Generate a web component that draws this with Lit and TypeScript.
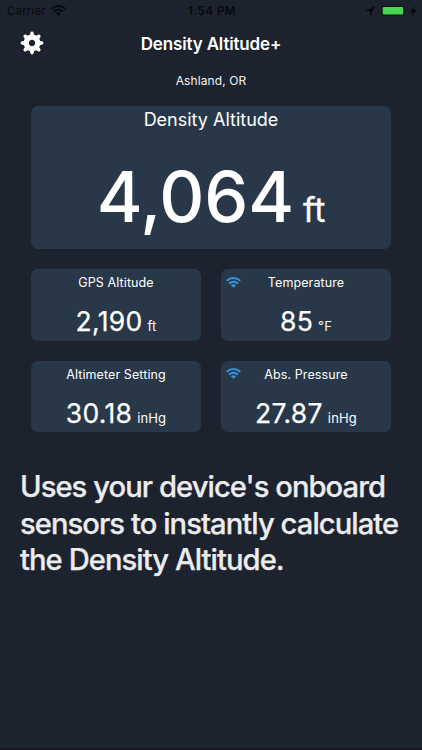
import { LitElement, html, css, svg, nothing } from "lit";
import { customElement, property } from "lit/decorators.js";

const wifi = svg`
  <path d="M0.7 3.8 Q7.5 -1.7 14.3 3.8" fill="none" stroke="currentColor" stroke-width="2"/>
  <path d="M3 6.5 Q7.5 2.9 12 6.5" fill="none" stroke="currentColor" stroke-width="1.9"/>
  <path d="M4.9 8.3 Q7.5 6.2 10.1 8.3 L8.2 10.2 Q7.5 10.8 6.8 10.2 Z" fill="currentColor"/>`;

@customElement("status-bar")
class StatusBar extends LitElement {
  static styles = css`
    :host {
      display: grid;
      grid-template-columns: 1fr auto 1fr;
      align-items: center;
      height: 22px;
      padding: 0 5px 0 7px;
      box-sizing: border-box;
      color: #06090d;
      font-size: 11.5px;
      line-height: 22px;
    }
    .left, .right { display: flex; align-items: center; }
    .left { gap: 5px; letter-spacing: 0.15px; }
    .left svg { margin-bottom: 1px; }
    .time { font-weight: 600; letter-spacing: 0.5px; }
    .right { justify-content: flex-end; }
    svg { display: block; }
  `;
  render() {
    return html`
      <div class="left">
        <span>Carrier</span>
        <svg width="15" height="11" viewBox="0 0 15 11">${wifi}</svg>
      </div>
      <div class="time">1:54 PM</div>
      <div class="right">
        <svg width="52" height="12" viewBox="0 0 52 12">
          <path d="M10 1 L5.3 11 L4.9 6.2 L0.3 5.8 Z" fill="currentColor"/>
          <rect x="16.5" y="0.8" width="23" height="10" rx="2" fill="#0b1015"/>
          <rect x="17.7" y="2" width="20.6" height="7.6" rx="1" fill="#44d650"/>
          <path d="M40.5 4.3 Q42 5.8 40.5 7.4 Z" fill="#0b1015"/>
          <path d="M50.3 0.8 L45.2 6.7 L48 6.7 L46.7 11.2 L51.7 5 L48.9 5 Z" fill="currentColor"/>
        </svg>
      </div>`;
  }
}

@customElement("nav-header")
class NavHeader extends LitElement {
  static styles = css`
    :host {
      display: grid;
      grid-template-columns: 44px 1fr 44px;
      align-items: center;
      height: 44px;
      padding: 0 10px;
      box-sizing: border-box;
      border-bottom: 1px solid #19202a;
    }
    .gear { display: block; justify-self: center; margin-bottom: 2px; }
    .title {
      text-align: center;
      color: #fff;
      font-size: 17px;
      font-weight: 600;
      letter-spacing: -0.16px;
      line-height: 43px;
      padding-top: 1px;
    }
  `;
  render() {
    const teeth = [0, 45, 90, 135, 180, 225, 270, 315];
    return html`
      <svg class="gear" width="24" height="24" viewBox="-12 -12 24 24" fill="#fff">
        <circle r="5.8" fill="none" stroke="#fff" stroke-width="5.2"/>
        ${teeth.map((a) => svg`<path transform="rotate(${a})" d="M-2.2 -7.4 L-1.7 -10 Q-1.4 -11.4 0 -11.4 Q1.4 -11.4 1.7 -10 L2.2 -7.4 Z"/>`)}
      </svg>
      <div class="title">Density Altitude+</div>`;
  }
}

@customElement("metric-card")
class MetricCard extends LitElement {
  @property() label = "";
  @property() value = "";
  @property() unit = "";
  @property({ type: Boolean }) sensor = false;
  @property({ type: Boolean, reflect: true }) large = false;

  static styles = css`
    :host {
      display: flex;
      flex-direction: column;
      align-items: center;
      position: relative;
      height: 71.5px;
      border-radius: 7px;
      background: #283849;
      color: #fff;
    }
    .label { font-size: 12.5px; line-height: 26px; letter-spacing: 0.1px; padding-top: 1px; }
    .reading { display: flex; align-items: baseline; gap: 5px; line-height: 36px; margin-top: 7px; }
    .value { font-size: 26.5px; letter-spacing: 0.3px; -webkit-text-stroke: 0.25px #fff; }
    .unit { font-size: 13px; letter-spacing: 0.15px; }
    .sensor { position: absolute; left: 5px; top: 7.5px; color: #3794e0; }
    :host([large]) { height: 143px; }
    :host([large]) .label { font-size: 18px; line-height: 26px; letter-spacing: 0; }
    :host([large]) .reading { gap: 9px; line-height: 90px; margin-top: 19px; }
    :host([large]) .value { font-size: 70px; font-weight: 500; letter-spacing: -0.2px; -webkit-text-stroke: 0; }
    :host([large]) .unit { font-size: 34px; letter-spacing: -0.2px; -webkit-text-stroke: 0.3px #fff; }
  `;
  render() {
    return html`
      ${this.sensor
        ? html`<svg class="sensor" width="15" height="11" viewBox="0 0 15 11">${wifi}</svg>`
        : nothing}
      <div class="label">${this.label}</div>
      <div class="reading">
        <span class="value">${this.value}</span><span class="unit">${this.unit}</span>
      </div>`;
  }
}

@customElement("app-root")
class AppRoot extends LitElement {
  static styles = css`
    :host {
      display: flex;
      flex-direction: column;
      box-sizing: border-box;
      height: 750px;
      overflow: hidden;
      background: #1c232e;
      border-bottom: 2px solid #171824;
      font-family: Inter, "Liberation Sans", sans-serif;
    }
    .place {
      text-align: center;
      color: #f1f3f5;
      font-size: 12px;
      line-height: 30px;
      letter-spacing: 0.1px;
    }
    .cards {
      display: grid;
      grid-template-columns: 170px 170px;
      gap: 20px;
      margin: 10px 31px 0;
    }
    .wide { grid-column: 1 / -1; }
    .caption {
      margin: 37px 0 0 20px;
      color: #ececee;
      font-size: 29.2px;
      font-weight: 500;
      line-height: 36.7px;
      letter-spacing: -0.95px;
      -webkit-text-stroke: 0.25px #ececee;
      white-space: nowrap;
    }
  `;
  render() {
    return html`
      <status-bar></status-bar>
      <nav-header></nav-header>
      <div class="place">Ashland, OR</div>
      <div class="cards">
        <metric-card class="wide" large label="Density Altitude" value="4,064" unit="ft"></metric-card>
        <metric-card label="GPS Altitude" value="2,190" unit="ft"></metric-card>
        <metric-card sensor label="Temperature" value="85" unit="°F"></metric-card>
        <metric-card label="Altimeter Setting" value="30.18" unit="inHg"></metric-card>
        <metric-card sensor label="Abs. Pressure" value="27.87" unit="inHg"></metric-card>
      </div>
      <div class="caption">
        Uses your device's onboard<br />sensors to instantly calculate<br />the Density Altitude.
      </div>`;
  }
}
